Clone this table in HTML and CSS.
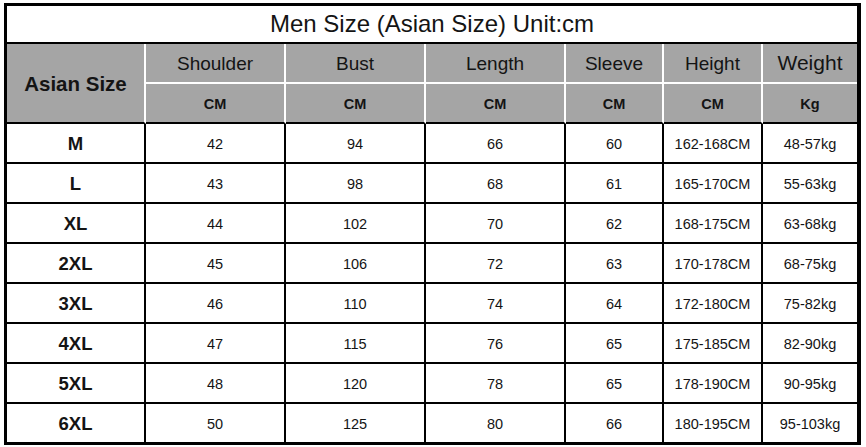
FILE: index.html
```html
<!DOCTYPE html>
<html lang="en">
<head>
<meta charset="utf-8">
<title>Men Size (Asian Size) Unit:cm</title>
<link rel="stylesheet" href="styles.css">
</head>
<body>
<div class="chart" role="table">
  <div class="title">Men Size (Asian Size) Unit:cm</div>

  <div class="hd corner">Asian Size</div>
  <div class="hd name">Shoulder</div>
  <div class="hd name">Bust</div>
  <div class="hd name">Length</div>
  <div class="hd name">Sleeve</div>
  <div class="hd name">Height</div>
  <div class="hd name weight last">Weight</div>

  <div class="hd unit">CM</div>
  <div class="hd unit">CM</div>
  <div class="hd unit">CM</div>
  <div class="hd unit">CM</div>
  <div class="hd unit">CM</div>
  <div class="hd unit last">Kg</div>

  <div class="c size">M</div><div class="c">42</div><div class="c">94</div><div class="c">66</div><div class="c">60</div><div class="c">162-168CM</div><div class="c last">48-57kg</div>
  <div class="c size">L</div><div class="c">43</div><div class="c">98</div><div class="c">68</div><div class="c">61</div><div class="c">165-170CM</div><div class="c last">55-63kg</div>
  <div class="c size">XL</div><div class="c">44</div><div class="c">102</div><div class="c">70</div><div class="c">62</div><div class="c">168-175CM</div><div class="c last">63-68kg</div>
  <div class="c size">2XL</div><div class="c">45</div><div class="c">106</div><div class="c">72</div><div class="c">63</div><div class="c">170-178CM</div><div class="c last">68-75kg</div>
  <div class="c size">3XL</div><div class="c">46</div><div class="c">110</div><div class="c">74</div><div class="c">64</div><div class="c">172-180CM</div><div class="c last">75-82kg</div>
  <div class="c size">4XL</div><div class="c">47</div><div class="c">115</div><div class="c">76</div><div class="c">65</div><div class="c">175-185CM</div><div class="c last">82-90kg</div>
  <div class="c size">5XL</div><div class="c">48</div><div class="c">120</div><div class="c">78</div><div class="c">65</div><div class="c">178-190CM</div><div class="c last">90-95kg</div>
  <div class="c size bottom">6XL</div><div class="c bottom">50</div><div class="c bottom">125</div><div class="c bottom">80</div><div class="c bottom">66</div><div class="c bottom">180-195CM</div><div class="c last bottom">95-103kg</div>
</div>
</body>
</html>
```

FILE: styles.css
```css
* {
  box-sizing: border-box;
}

html, body {
  margin: 0;
  padding: 0;
  background: #ffffff;
}

body {
  font-family: "Liberation Sans", Arial, sans-serif;
  color: #141414;
}

.chart {
  display: grid;
  grid-template-columns: 139px 140px 140px 140px 98px 99px 94px;
  grid-template-rows: 38px 40px 40px repeat(7, 40px) 38px;
  width: max-content;
  margin: 3px 0 0 4px;
  border: 3px solid #000;
  border-right-width: 4px;
}

.title,
.hd,
.c {
  display: flex;
  align-items: center;
  justify-content: center;
  white-space: nowrap;
}

.title {
  grid-column: 1 / -1;
  border-bottom: 2px solid #000;
  font-size: 24px;
  background: #fff;
}

.hd {
  background: #a5a5a5;
  border-right: 2px solid #fff;
}

.name {
  font-size: 19px;
  border-bottom: 2px solid #fff;
  padding-top: 1px;
}

.name.weight {
  font-size: 21px;
  padding-top: 0;
  padding-bottom: 1px;
}

.corner {
  grid-row: span 2;
  font-size: 20.5px;
  font-weight: bold;
  border-bottom: 2px solid #000;
  padding-top: 1px;
}

.unit {
  font-size: 14.5px;
  font-weight: bold;
  border-bottom: 2px solid #000;
  padding-top: 1px;
}

.c {
  font-size: 14.5px;
  border-right: 2px solid #000;
  border-bottom: 2px solid #000;
  padding-top: 2px;
}

.c.size {
  font-size: 18.5px;
  font-weight: bold;
}

.last {
  border-right: none;
}

.bottom {
  border-bottom: none;
}
```
